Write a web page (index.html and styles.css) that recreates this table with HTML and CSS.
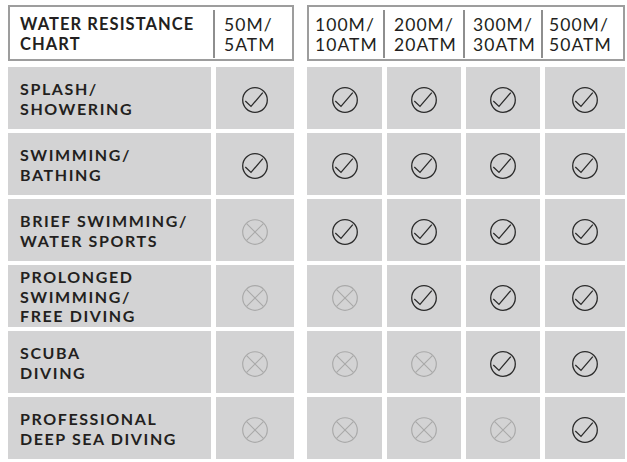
FILE: index.html
```html
<!DOCTYPE html>
<html lang="en">
<head>
<meta charset="utf-8">
<title>Water Resistance Chart</title>
<link rel="stylesheet" href="styles.css">
</head>
<body>
<div class="chart">
  <div class="head head-left">
    <div class="hcell title">WATER RESISTANCE<br>CHART</div>
    <div class="hcell w50 div">50M/<br>5ATM</div>
  </div>
  <div class="head head-right">
    <div class="hcell w100">100M/<br>10ATM</div>
    <div class="hcell w200 div">200M/<br>20ATM</div>
    <div class="hcell w300 div">300M/<br>30ATM</div>
    <div class="hcell w500 div">500M/<br>50ATM</div>
  </div>

  <div class="row">
    <div class="label">SPLASH/<br>SHOWERING</div>
    <div class="cell"><svg class="ico yes" viewBox="0 0 26 26"><circle cx="13" cy="13" r="12.3"/><polyline points="3.3,14 9,19.4 20.8,5.6"/></svg></div>
    <div class="cell"><svg class="ico yes" viewBox="0 0 26 26"><circle cx="13" cy="13" r="12.3"/><polyline points="3.3,14 9,19.4 20.8,5.6"/></svg></div>
    <div class="cell"><svg class="ico yes" viewBox="0 0 26 26"><circle cx="13" cy="13" r="12.3"/><polyline points="3.3,14 9,19.4 20.8,5.6"/></svg></div>
    <div class="cell"><svg class="ico yes" viewBox="0 0 26 26"><circle cx="13" cy="13" r="12.3"/><polyline points="3.3,14 9,19.4 20.8,5.6"/></svg></div>
    <div class="cell"><svg class="ico yes" viewBox="0 0 26 26"><circle cx="13" cy="13" r="12.3"/><polyline points="3.3,14 9,19.4 20.8,5.6"/></svg></div>
  </div>

  <div class="row">
    <div class="label">SWIMMING/<br>BATHING</div>
    <div class="cell"><svg class="ico yes" viewBox="0 0 26 26"><circle cx="13" cy="13" r="12.3"/><polyline points="3.3,14 9,19.4 20.8,5.6"/></svg></div>
    <div class="cell"><svg class="ico yes" viewBox="0 0 26 26"><circle cx="13" cy="13" r="12.3"/><polyline points="3.3,14 9,19.4 20.8,5.6"/></svg></div>
    <div class="cell"><svg class="ico yes" viewBox="0 0 26 26"><circle cx="13" cy="13" r="12.3"/><polyline points="3.3,14 9,19.4 20.8,5.6"/></svg></div>
    <div class="cell"><svg class="ico yes" viewBox="0 0 26 26"><circle cx="13" cy="13" r="12.3"/><polyline points="3.3,14 9,19.4 20.8,5.6"/></svg></div>
    <div class="cell"><svg class="ico yes" viewBox="0 0 26 26"><circle cx="13" cy="13" r="12.3"/><polyline points="3.3,14 9,19.4 20.8,5.6"/></svg></div>
  </div>

  <div class="row">
    <div class="label">BRIEF SWIMMING/<br>WATER SPORTS</div>
    <div class="cell"><svg class="ico no" viewBox="0 0 26 26"><circle cx="13" cy="13" r="12.3"/><path d="M4.6 4.6L21.4 21.4M21.4 4.6L4.6 21.4"/></svg></div>
    <div class="cell"><svg class="ico yes" viewBox="0 0 26 26"><circle cx="13" cy="13" r="12.3"/><polyline points="3.3,14 9,19.4 20.8,5.6"/></svg></div>
    <div class="cell"><svg class="ico yes" viewBox="0 0 26 26"><circle cx="13" cy="13" r="12.3"/><polyline points="3.3,14 9,19.4 20.8,5.6"/></svg></div>
    <div class="cell"><svg class="ico yes" viewBox="0 0 26 26"><circle cx="13" cy="13" r="12.3"/><polyline points="3.3,14 9,19.4 20.8,5.6"/></svg></div>
    <div class="cell"><svg class="ico yes" viewBox="0 0 26 26"><circle cx="13" cy="13" r="12.3"/><polyline points="3.3,14 9,19.4 20.8,5.6"/></svg></div>
  </div>

  <div class="row">
    <div class="label">PROLONGED<br>SWIMMING/<br>FREE DIVING</div>
    <div class="cell"><svg class="ico no" viewBox="0 0 26 26"><circle cx="13" cy="13" r="12.3"/><path d="M4.6 4.6L21.4 21.4M21.4 4.6L4.6 21.4"/></svg></div>
    <div class="cell"><svg class="ico no" viewBox="0 0 26 26"><circle cx="13" cy="13" r="12.3"/><path d="M4.6 4.6L21.4 21.4M21.4 4.6L4.6 21.4"/></svg></div>
    <div class="cell"><svg class="ico yes" viewBox="0 0 26 26"><circle cx="13" cy="13" r="12.3"/><polyline points="3.3,14 9,19.4 20.8,5.6"/></svg></div>
    <div class="cell"><svg class="ico yes" viewBox="0 0 26 26"><circle cx="13" cy="13" r="12.3"/><polyline points="3.3,14 9,19.4 20.8,5.6"/></svg></div>
    <div class="cell"><svg class="ico yes" viewBox="0 0 26 26"><circle cx="13" cy="13" r="12.3"/><polyline points="3.3,14 9,19.4 20.8,5.6"/></svg></div>
  </div>

  <div class="row">
    <div class="label">SCUBA<br>DIVING</div>
    <div class="cell"><svg class="ico no" viewBox="0 0 26 26"><circle cx="13" cy="13" r="12.3"/><path d="M4.6 4.6L21.4 21.4M21.4 4.6L4.6 21.4"/></svg></div>
    <div class="cell"><svg class="ico no" viewBox="0 0 26 26"><circle cx="13" cy="13" r="12.3"/><path d="M4.6 4.6L21.4 21.4M21.4 4.6L4.6 21.4"/></svg></div>
    <div class="cell"><svg class="ico no" viewBox="0 0 26 26"><circle cx="13" cy="13" r="12.3"/><path d="M4.6 4.6L21.4 21.4M21.4 4.6L4.6 21.4"/></svg></div>
    <div class="cell"><svg class="ico yes" viewBox="0 0 26 26"><circle cx="13" cy="13" r="12.3"/><polyline points="3.3,14 9,19.4 20.8,5.6"/></svg></div>
    <div class="cell"><svg class="ico yes" viewBox="0 0 26 26"><circle cx="13" cy="13" r="12.3"/><polyline points="3.3,14 9,19.4 20.8,5.6"/></svg></div>
  </div>

  <div class="row">
    <div class="label">PROFESSIONAL<br>DEEP SEA DIVING</div>
    <div class="cell"><svg class="ico no" viewBox="0 0 26 26"><circle cx="13" cy="13" r="12.3"/><path d="M4.6 4.6L21.4 21.4M21.4 4.6L4.6 21.4"/></svg></div>
    <div class="cell"><svg class="ico no" viewBox="0 0 26 26"><circle cx="13" cy="13" r="12.3"/><path d="M4.6 4.6L21.4 21.4M21.4 4.6L4.6 21.4"/></svg></div>
    <div class="cell"><svg class="ico no" viewBox="0 0 26 26"><circle cx="13" cy="13" r="12.3"/><path d="M4.6 4.6L21.4 21.4M21.4 4.6L4.6 21.4"/></svg></div>
    <div class="cell"><svg class="ico no" viewBox="0 0 26 26"><circle cx="13" cy="13" r="12.3"/><path d="M4.6 4.6L21.4 21.4M21.4 4.6L4.6 21.4"/></svg></div>
    <div class="cell"><svg class="ico yes" viewBox="0 0 26 26"><circle cx="13" cy="13" r="12.3"/><polyline points="3.3,14 9,19.4 20.8,5.6"/></svg></div>
  </div>
</div>
</body>
</html>
```
FILE: styles.css
```css
html, body {
  margin: 0;
  padding: 0;
  background: #ffffff;
}

body {
  font-family: Lato, "Liberation Sans", sans-serif;
  color: #231f20;
}

.chart {
  display: grid;
  grid-template-columns: 203px 78px 3px 75px 74px 74px 80px;
  grid-template-rows: 58px repeat(6, 62px);
  column-gap: 5px;
  row-gap: 4px;
  padding: 5px 0 0 8px;
}

.head {
  display: flex;
  align-self: start;
  height: 56px;
  box-sizing: border-box;
  border: 2px solid #9d9d9d;
  background: #ffffff;
}

.head-left {
  grid-column: 1 / span 2;
}

.head-right {
  grid-column: 4 / span 4;
}

.hcell {
  margin: 3px 0 1px 0;
  padding: 5px 0 0 7px;
  font-size: 17.5px;
  line-height: 19.5px;
  letter-spacing: 0.06em;
  white-space: nowrap;
  box-sizing: border-box;
}

.hcell.div {
  border-left: 2px solid #8e8e8e;
}

.title {
  width: 203px;
  padding-left: 10px;
  font-weight: 700;
  font-size: 16.5px;
  letter-spacing: 0.065em;
}

.w50 {
  flex: 1;
  padding-left: 9px;
}

.w100 { width: 74px; padding-left: 6px; }
.w200 { width: 80px; padding-left: 9px; }
.w300 { width: 78px; padding-left: 8px; }
.w500 { flex: 1; padding-left: 6px; }

.row {
  display: contents;
}

.row > :nth-child(3) {
  grid-column: 4;
}

.label,
.cell {
  background: #d3d3d4;
}

.label {
  display: flex;
  align-items: center;
  padding: 1px 0 0 12px;
  font-weight: 700;
  font-size: 16px;
  line-height: 19.8px;
  letter-spacing: 0.1em;
  white-space: nowrap;
}

.cell {
  display: flex;
  align-items: center;
  justify-content: center;
  padding-top: 4px;
  box-sizing: border-box;
}

.ico {
  width: 26px;
  height: 26px;
  fill: none;
  overflow: visible;
}

.ico.yes {
  stroke: #2b2b2b;
  stroke-width: 1.3;
}

.ico.no {
  stroke: #a9a9a9;
  stroke-width: 1.15;
}
```
